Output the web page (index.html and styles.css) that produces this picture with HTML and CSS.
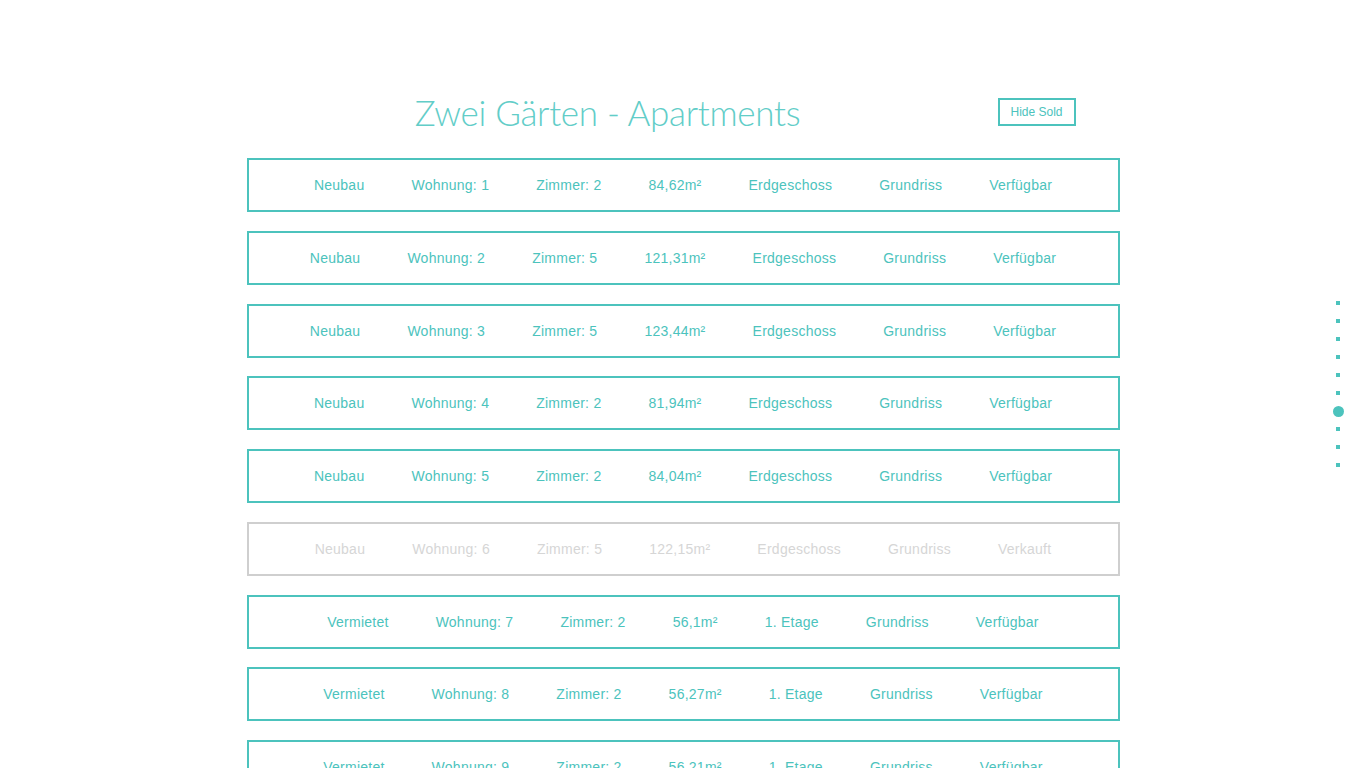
FILE: index.html
```html
<!DOCTYPE html>
<html lang="de">

<head>
    <meta charset="utf-8">
    <meta name="viewport" content="width=device-width, initial-scale=1.0">
    <title>Zwei Gärten - Apartments</title>
    <link rel="stylesheet" href="styles.css">
</head>

<body>
    <main class="page">
        <header class="header">
            <h1 class="title">Zwei Gärten - Apartments</h1>
            <button class="hide-btn">Hide Sold</button>
        </header>

        <div class="apartments">
            <div class="apartment">
                <span>Neubau</span><span>Wohnung: 1</span><span>Zimmer: 2</span><span>84,62m²</span>
                <span>Erdgeschoss</span><span>Grundriss</span><span>Verfügbar</span>
            </div>
            <div class="apartment">
                <span>Neubau</span><span>Wohnung: 2</span><span>Zimmer: 5</span><span>121,31m²</span>
                <span>Erdgeschoss</span><span>Grundriss</span><span>Verfügbar</span>
            </div>
            <div class="apartment">
                <span>Neubau</span><span>Wohnung: 3</span><span>Zimmer: 5</span><span>123,44m²</span>
                <span>Erdgeschoss</span><span>Grundriss</span><span>Verfügbar</span>
            </div>
            <div class="apartment">
                <span>Neubau</span><span>Wohnung: 4</span><span>Zimmer: 2</span><span>81,94m²</span>
                <span>Erdgeschoss</span><span>Grundriss</span><span>Verfügbar</span>
            </div>
            <div class="apartment">
                <span>Neubau</span><span>Wohnung: 5</span><span>Zimmer: 2</span><span>84,04m²</span>
                <span>Erdgeschoss</span><span>Grundriss</span><span>Verfügbar</span>
            </div>
            <div class="apartment sold">
                <span>Neubau</span><span>Wohnung: 6</span><span>Zimmer: 5</span><span>122,15m²</span>
                <span>Erdgeschoss</span><span>Grundriss</span><span>Verkauft</span>
            </div>
            <div class="apartment">
                <span>Vermietet</span><span>Wohnung: 7</span><span>Zimmer: 2</span><span>56,1m²</span>
                <span>1. Etage</span><span>Grundriss</span><span>Verfügbar</span>
            </div>
            <div class="apartment">
                <span>Vermietet</span><span>Wohnung: 8</span><span>Zimmer: 2</span><span>56,27m²</span>
                <span>1. Etage</span><span>Grundriss</span><span>Verfügbar</span>
            </div>
            <div class="apartment">
                <span>Vermietet</span><span>Wohnung: 9</span><span>Zimmer: 2</span><span>56,21m²</span>
                <span>1. Etage</span><span>Grundriss</span><span>Verfügbar</span>
            </div>
        </div>
    </main>

    <nav class="dots" aria-label="Sections">
        <span class="dot"></span>
        <span class="dot"></span>
        <span class="dot"></span>
        <span class="dot"></span>
        <span class="dot"></span>
        <span class="dot"></span>
        <span class="dot active"></span>
        <span class="dot"></span>
        <span class="dot"></span>
        <span class="dot"></span>
    </nav>
</body>

</html>
```

FILE: styles.css
```css
*,
*::after,
*::before {
    margin: 0;
    padding: 0;
    box-sizing: border-box;
}

body {
    background-color: #fff;
    color: #4cc3bd;
    font-family: 'Liberation Sans', Arial, sans-serif;
    overflow: hidden;
    height: 768px;
}

.page {
    width: 873px;
    margin: 0 auto;
    padding-top: 89px;
}

.header {
    display: flex;
    align-items: center;
    height: 46px;
    margin-bottom: 23px;
}

.title {
    flex: 1;
    text-align: center;
    font-family: Lato, 'Open Sans', sans-serif;
    font-weight: 300;
    font-size: 35px;
    letter-spacing: -.3px;
    color: #62cdc8;
}

.hide-btn {
    margin-left: 29px;
    margin-right: 44px;
    width: 78px;
    height: 28px;
    background: #fff;
    border: 2px solid #4cc3bd;
    color: #4cc3bd;
    font-family: 'Liberation Sans', Arial, sans-serif;
    font-size: 12px;
    cursor: pointer;
}

.apartment {
    display: flex;
    justify-content: center;
    align-items: center;
    gap: 47px;
    height: 54px;
    margin-bottom: 18.75px;
    border: 2px solid #4cc3bd;
    font-size: 14px;
    letter-spacing: .25px;
}

.apartment.sold {
    border-color: #cfcfcf;
    color: #d6d6d6;
}

.dots {
    position: fixed;
    right: 20px;
    top: 50%;
    transform: translateY(-50%);
    display: flex;
    flex-direction: column;
    align-items: center;
    width: 16px;
}

.dot {
    display: flex;
    align-items: center;
    justify-content: center;
    height: 18px;
}

.dot::before {
    content: "";
    display: block;
    width: 4px;
    height: 4px;
    background-color: #4cc3bd;
}

.dot.active::before {
    width: 11px;
    height: 11px;
    border-radius: 50%;
}
```
